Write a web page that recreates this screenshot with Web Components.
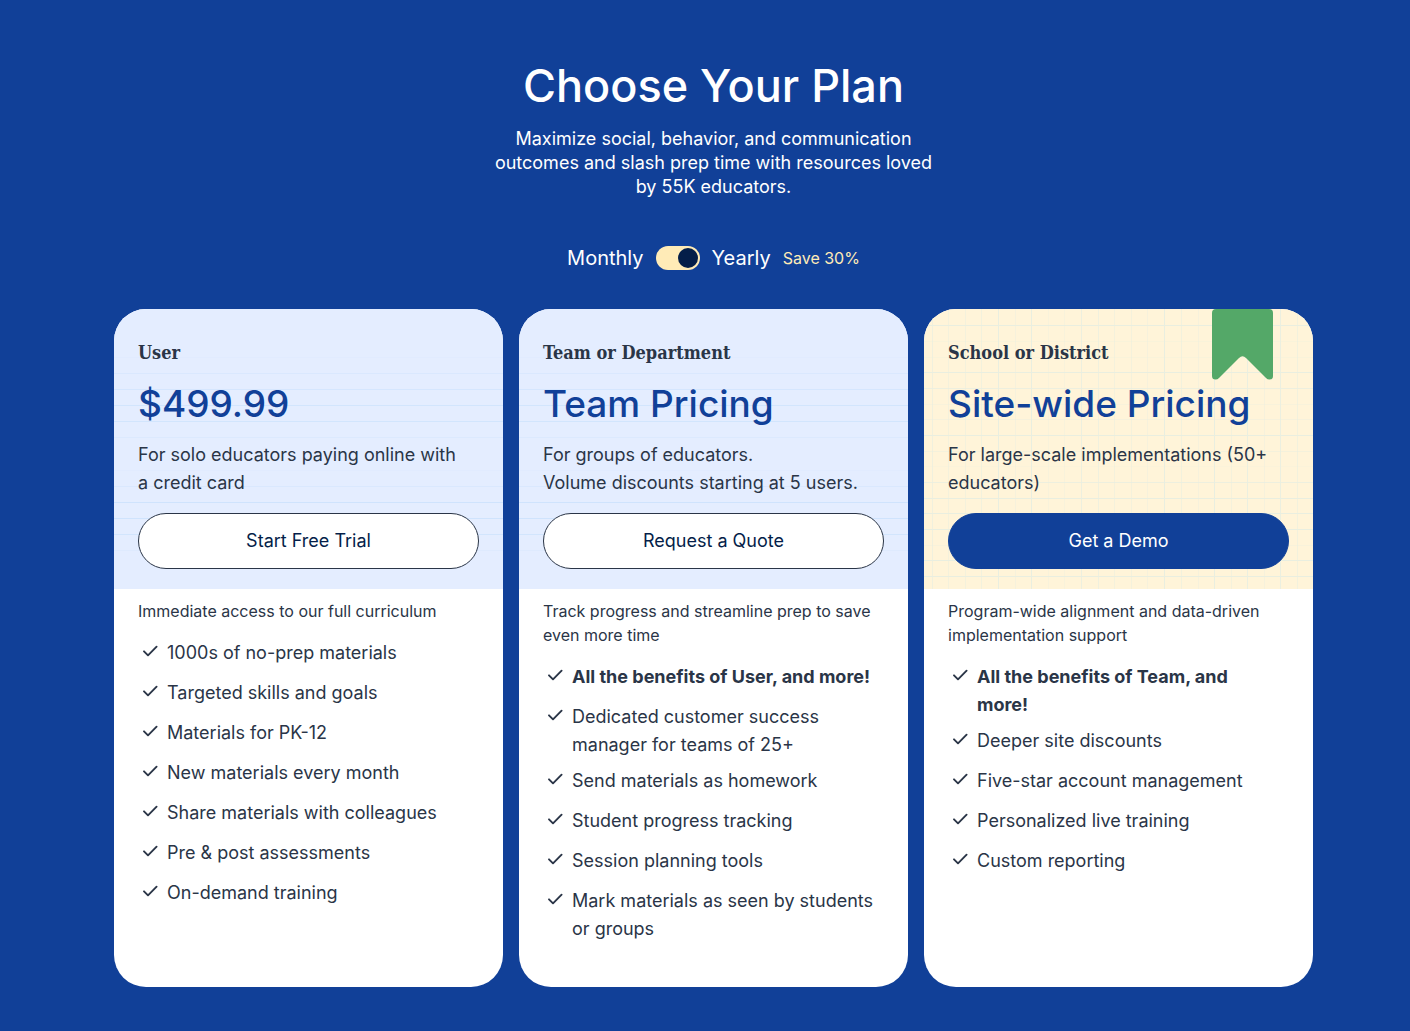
<!DOCTYPE html>
<html lang="en">
<head>
<meta charset="utf-8">
<meta name="viewport" content="width=device-width, initial-scale=1">
<title>Choose Your Plan</title>
<style>
  body { margin: 0; min-height: 100vh; background: #114098; color: #2a3547; font-family: Inter, "Open Sans", sans-serif; }
</style>
</head>
<body>
<pricing-page>
  <plan-header slot="header">
    <span slot="title">Choose Your Plan</span>
    Maximize social, behavior, and communication outcomes and slash prep time with resources loved by 55K educators.
  </plan-header>
  <billing-toggle slot="billing"></billing-toggle>

  <plan-card action="Start Free Trial">
    <span slot="name">User</span>
    <span slot="price">$499.99</span>
    <span slot="summary">For solo educators paying online with a credit card</span>
    <span slot="intro">Immediate access to our full curriculum</span>
    <plan-feature>1000s of no-prep materials</plan-feature>
    <plan-feature>Targeted skills and goals</plan-feature>
    <plan-feature>Materials for PK-12</plan-feature>
    <plan-feature>New materials every month</plan-feature>
    <plan-feature>Share materials with colleagues</plan-feature>
    <plan-feature>Pre &amp; post assessments</plan-feature>
    <plan-feature>On-demand training</plan-feature>
  </plan-card>

  <plan-card action="Request a Quote">
    <span slot="name">Team or Department</span>
    <span slot="price">Team Pricing</span>
    <span slot="summary">For groups of educators.<br>Volume discounts starting at 5 users.</span>
    <span slot="intro">Track progress and streamline prep to save even more time</span>
    <plan-feature strong>All the benefits of User, and more!</plan-feature>
    <plan-feature>Dedicated customer success manager for teams of 25+</plan-feature>
    <plan-feature>Send materials as homework</plan-feature>
    <plan-feature>Student progress tracking</plan-feature>
    <plan-feature>Session planning tools</plan-feature>
    <plan-feature>Mark materials as seen by students or groups</plan-feature>
  </plan-card>

  <plan-card featured action="Get a Demo">
    <span slot="name">School or District</span>
    <span slot="price">Site-wide Pricing</span>
    <span slot="summary">For large-scale implementations (50+ educators)</span>
    <span slot="intro">Program-wide alignment and data-driven implementation support</span>
    <plan-feature strong>All the benefits of Team, and more!</plan-feature>
    <plan-feature>Deeper site discounts</plan-feature>
    <plan-feature>Five-star account management</plan-feature>
    <plan-feature>Personalized live training</plan-feature>
    <plan-feature>Custom reporting</plan-feature>
  </plan-card>
</pricing-page>

<script>
class BaseElement extends HTMLElement {
  connectedCallback() {
    if (this.shadowRoot) return;
    this.attachShadow({ mode: "open" }).innerHTML = this.render();
  }
}

class PricingPage extends BaseElement {
  render() {
    return `<style>
      :host { display: block; padding: 58px 97px 44px 114px; }
      .plans { display: grid; grid-template-columns: repeat(3, minmax(0, 1fr)); gap: 16px; margin-top: 36px; }
    </style>
    <main>
      <slot name="header"></slot>
      <slot name="billing"></slot>
      <div class="plans"><slot></slot></div>
    </main>`;
  }
}

class PlanHeader extends BaseElement {
  render() {
    return `<style>
      :host { display: flex; flex-direction: column; align-items: center; gap: 13px; color: #fff; text-align: center; }
      h1 { margin: 0; font-size: 45px; line-height: 56px; font-weight: 500; }
      p { margin: 0; max-width: 460px; font-size: 18px; line-height: 24px; }
    </style>
    <h1><slot name="title"></slot></h1>
    <p><slot></slot></p>`;
  }
}

class BillingToggle extends BaseElement {
  render() {
    return `<style>
      :host { display: flex; justify-content: center; align-items: center; gap: 12px; margin-top: 44px; color: #fff; font-size: 20px; line-height: 30px; }
      input { appearance: none; box-sizing: border-box; display: flex; justify-content: flex-start; width: 44px; height: 24px; margin: 0; padding: 2px; border-radius: 12px; background: #ffebb7; cursor: pointer; }
      input::before { content: ""; width: 20px; height: 20px; border-radius: 50%; background: #041e49; }
      input:checked { justify-content: flex-end; }
      .save { color: #ffebb7; font-size: 16px; }
    </style>
    <span>Monthly</span>
    <input type="checkbox" id="cycle" role="switch" checked>
    <label for="cycle">Yearly</label>
    <span class="save">Save 30%</span>`;
  }
}

/* Ruled paper: [offset from top, opacity] */
const RULES = [[48, .15], [64, .5], [80, .7], [96, .9], [112, .9], [128, .4], [161, .15], [177, .5], [193, 1], [209, 1], [225, .9], [241, .3]];
/* Graph paper: rows and columns */
const ROWS = [[16, 1], [32, .25], [48, .25], [63, 1], [79, .8], [95, .3], [110, .4], [126, 1], [142, .5], [157, .2], [173, .8], [189, 1], [204, 1], [220, 1], [236, .3], [251, 1], [267, 1]];
const COLS = [[8, .7], [24, .5], [41, .5], [57, .6], [74, 1], [91, .4], [107, 1], [124, .3], [140, .3], [157, .8], [174, .7], [190, .5], [207, .5], [223, .4], [240, 1], [257, .6], [274, .4], [290, 1], [307, .5], [323, .9], [340, .4], [356, .9], [373, .6]];

const paper = (rows, cols, color) => `<svg class="paper" aria-hidden="true" fill="${color}">
  ${rows.map(([y, o]) => `<rect y="${y}" width="100%" height="1" opacity="${o}"/>`).join("")}
  ${cols.map(([x, o]) => `<rect x="${x}" width="1" height="100%" opacity="${o}"/>`).join("")}
</svg>`;

class PlanCard extends BaseElement {
  render() {
    const featured = this.hasAttribute("featured");
    return `<style>
      :host { display: flex; flex-direction: column; overflow: hidden; border-radius: 32px; background: #fff; }
      header { position: relative; isolation: isolate; display: flex; flex-direction: column; gap: 12px; padding: 30px 24px 20px; background: #e4edff; }
      :host([featured]) header { background: #fff4d9; }
      .paper { position: absolute; inset: 0; z-index: -1; width: 100%; height: 100%; }
      .ribbon { position: absolute; top: 0; right: 40px; z-index: -1; width: 61px; height: 71px; }
      h2 { margin: 0; font: 600 18px/28px "DejaVu Serif Condensed", "DejaVu Serif", serif; }
      .price { margin: 0; color: #114098; font-size: 37px; line-height: 50px; font-weight: 500; white-space: nowrap; }
      .summary { margin: 0; max-width: 328px; font-size: 18px; line-height: 28px; }
      button { box-sizing: border-box; width: 100%; height: 56px; margin-top: 4px; padding: 0 24px 2px; border: 1px solid #2a3547; border-radius: 28px; background: #fff; color: #041e49; font: inherit; font-size: 18px; cursor: pointer; }
      :host([featured]) button { border-color: #114098; background: #114098; color: #fff; }
      section { display: flex; flex-direction: column; gap: 12px; padding: 10px 24px 40px; }
      .intro { margin: 0; font-size: 16px; line-height: 24px; }
    </style>
    <header>
      ${featured ? paper(ROWS, COLS, "#e9eee0") : paper(RULES, [], "#cfe3fd")}
      ${featured ? `<svg class="ribbon" viewBox="0 0 61 71" aria-hidden="true"><path fill="#54a868" d="M4 0H57Q61 0 61 4V67Q61 70.500 57.500 70.500Q55.500 70.500 54 69L34 49Q30.500 45.500 27 49L7 69Q5.500 70.500 3.500 70.500Q0 70.500 0 67V4Q0 0 4 0Z"/></svg>` : ""}
      <h2><slot name="name"></slot></h2>
      <p class="price"><slot name="price"></slot></p>
      <p class="summary"><slot name="summary"></slot></p>
      <button type="button">${this.getAttribute("action")}</button>
    </header>
    <section>
      <p class="intro"><slot name="intro"></slot></p>
      <div role="list"><slot></slot></div>
    </section>`;
  }
}

class PlanFeature extends BaseElement {
  render() {
    this.setAttribute("role", "listitem");
    return `<style>
      :host { box-sizing: border-box; display: flex; gap: 5px; min-height: 40px; padding: 4px 0; font-size: 18px; line-height: 28px; }
      :host([strong]) { font-weight: 700; }
      svg { flex: none; width: 24px; height: 24px; }
      span { max-width: 306px; }
    </style>
    <svg viewBox="0 0 24 24" fill="none" stroke="#2a3547" stroke-width="1.900" stroke-linecap="round" stroke-linejoin="round" aria-hidden="true"><path d="M6 12.300L10 16.300L18.600 7.700"/></svg>
    <span><slot></slot></span>`;
  }
}

customElements.define("pricing-page", PricingPage);
customElements.define("plan-header", PlanHeader);
customElements.define("billing-toggle", BillingToggle);
customElements.define("plan-card", PlanCard);
customElements.define("plan-feature", PlanFeature);
</script>
</body>
</html>
